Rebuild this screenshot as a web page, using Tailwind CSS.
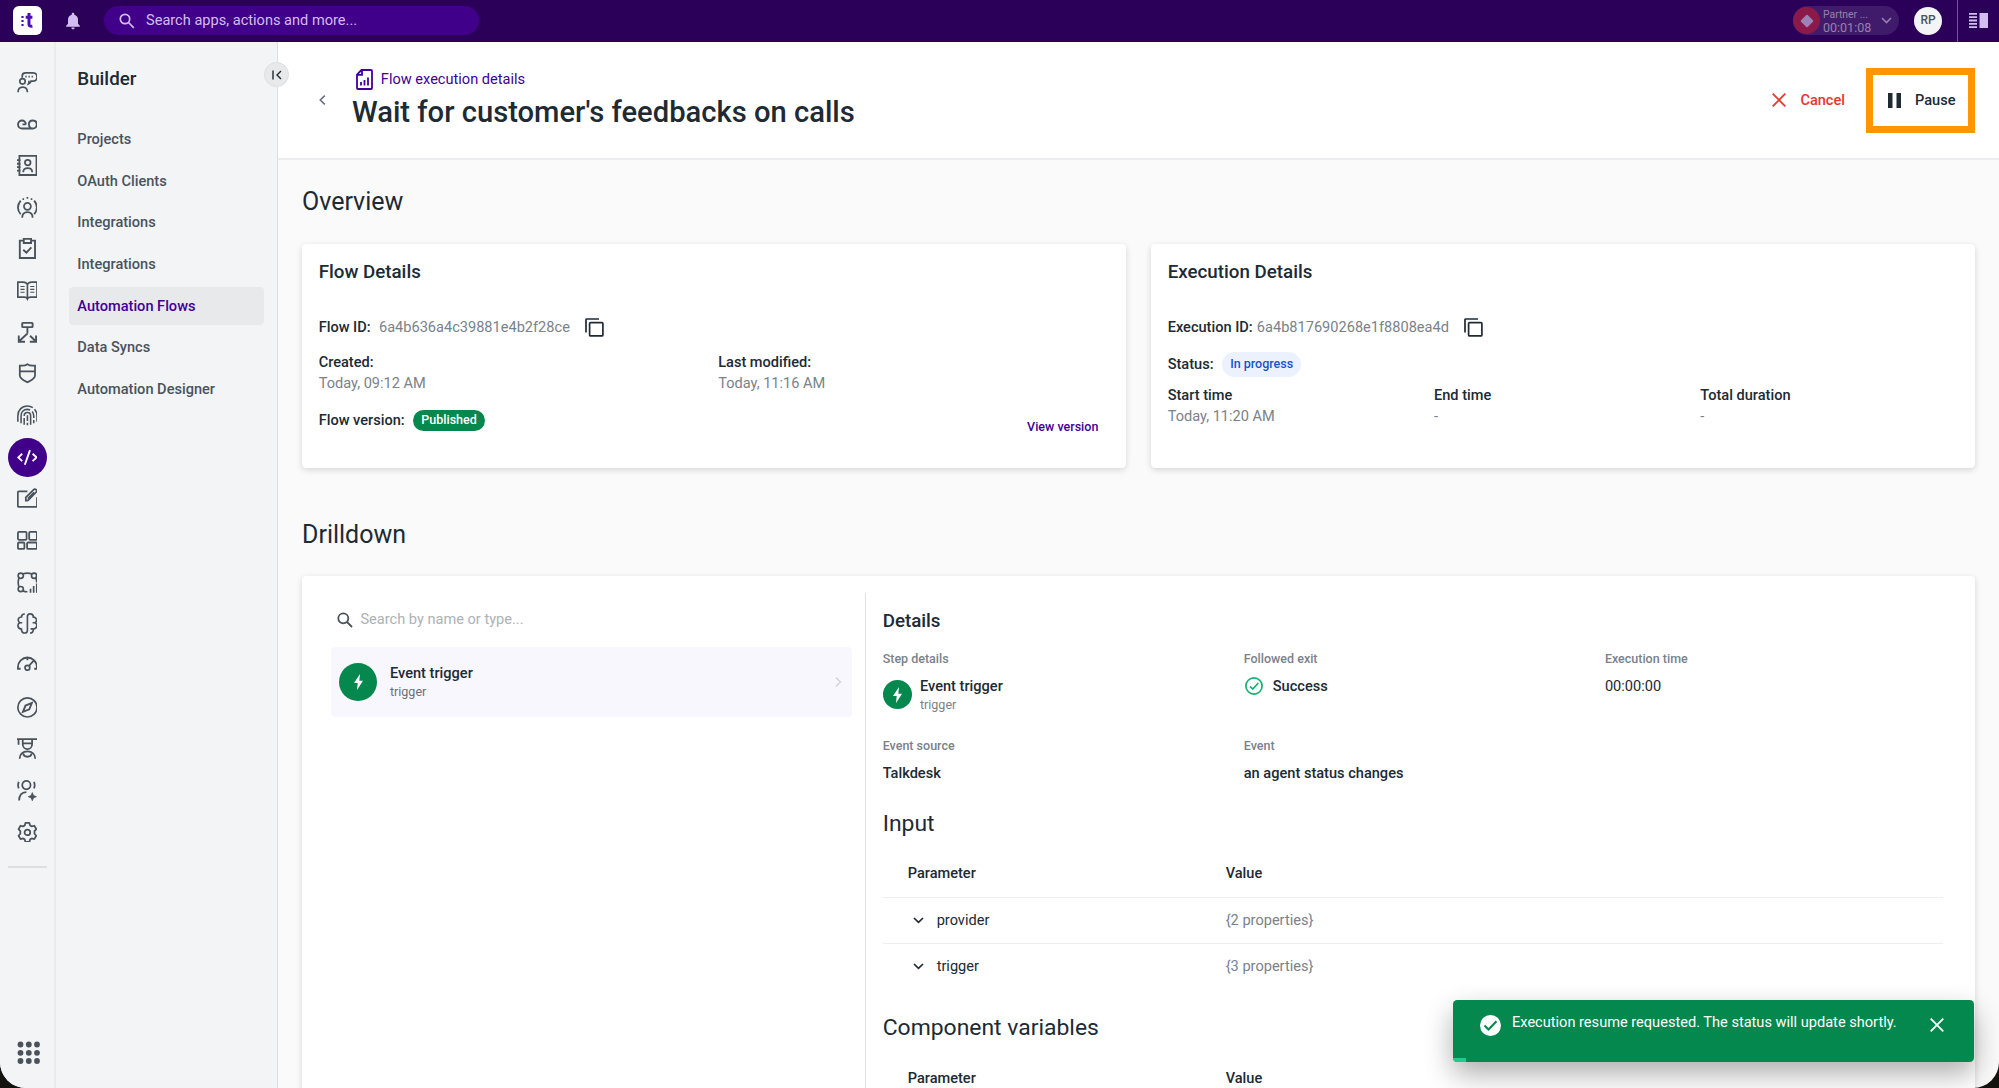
<!DOCTYPE html>
<html lang="en" class="text-[16.667px]">
  <head>
    <meta charset="UTF-8" />
    <meta name="viewport" content="width=device-width, initial-scale=1.0" />
    <title>Flow execution details</title>
    <script src="https://cdn.jsdelivr.net/npm/@tailwindcss/browser@4"></script>
  </head>
  <body class="bg-[#15130f]">
    <div class="relative flex flex-col h-screen overflow-hidden rounded-b-[26px] bg-[#fafafa] font-[Roboto,sans-serif] text-sm text-[#202a33]">
      <!-- Top bar -->
      <header class="flex h-10 shrink-0 items-center bg-[#2b0059] pl-[13px]">
        <div class="flex size-[29px] items-center justify-center rounded-[6px] bg-white">
          <svg class="size-[29px]" viewBox="0 0 29 29" fill="none" stroke="#4b0fb5">
            <path d="M16 7v11.2c0 1.8 1.2 2.4 3.4 2M12.7 11.3h6.7" stroke-width="3" />
            <path d="M9.5 10v2m0 2v2m0 2v2" stroke-width="2.2" />
          </svg>
        </div>
        <svg class="ml-[23px] h-[18px] w-[16px]" viewBox="0 0 16 18" fill="#d3bdf0">
          <path d="M8 .8c.8 0 1.3.5 1.3 1.3v.6c2.400.6 3.700 2.600 3.700 5.100v4l1.800 1.900v1H1.200v-1L3 11.800v-4C3 5.300 4.300 3.300 6.700 2.700v-.6C6.700 1.300 7.200.8 8 .8zM6.300 15.500h3.400c0 1-.7 1.800-1.700 1.800s-1.700-.8-1.700-1.800z" />
        </svg>
        <div class="ml-[23px] flex h-7 w-[375px] items-center rounded-full bg-[#410089] pl-[15px] text-[#d3bdf0]">
          <svg class="size-[16px]" viewBox="0 0 16 16" fill="none" stroke="currentColor" stroke-width="1.700">
            <circle cx="6" cy="6" r="4.700" /><path d="M9.500 9.500l5.300 5.300" />
          </svg>
          <span class="ml-[11px]">Search apps, actions and more...</span>
        </div>
        <div class="ml-auto flex h-[29px] w-[106px] items-center rounded-full bg-[#411b6b] text-[#9681ae]">
          <div class="flex size-[27px] items-center justify-center rounded-full bg-[#8b1a4b]">
            <svg class="size-[14px]" viewBox="0 0 14 14" fill="#9c83b8"><rect x="2.300" y="2.300" width="9.400" height="9.400" rx="1" transform="rotate(45 7 7)" /></svg>
          </div>
          <div class="ml-[3px] w-[49px]">
            <div class="text-[10.4px] leading-[13px]">Partner ...</div>
            <div class="text-[12.5px] leading-[13px]">00:01:08</div>
          </div>
          <svg class="ml-[9px] h-[7px] w-[11px]" viewBox="0 0 11 7" fill="none" stroke="currentColor" stroke-width="1.600"><path d="M1 1l4.500 4.500L10 1" /></svg>
        </div>
        <div class="ml-[15px] flex size-[28px] items-center justify-center rounded-full bg-[#f2f4f6] text-[12px] font-medium text-[#4a535c]">RP</div>
        <div class="ml-[15px] flex h-full w-[42px] items-center border-l border-[#76549a] pl-[11px]">
          <svg class="h-[15px] w-[19px]" viewBox="0 0 19 15" fill="#d3bdf0">
            <path d="M0 0h8v1.800H0zM0 3.300h8v1.800H0zM0 6.600h8v1.800H0zM0 9.900h8v1.800H0zM0 13.200h8V15H0zM10.500 0H19v15h-8.500z" />
          </svg>
        </div>
      </header>

      <div class="flex min-h-0 flex-1">
        <!-- App rail -->
        <nav class="flex w-[56px] shrink-0 flex-col items-center border-r-2 border-[#e9ebed] bg-[#f2f4f6] pt-4.75 text-[#4a535c]">
          <div class="flex h-10 shrink-0 items-center">
            <svg class="size-5" viewBox="0 0 20 20" fill="none" stroke="currentColor" stroke-width="1.600">
              <path d="M1 19.500c0-3.200 1.800-5 4.500-5s4.500 1.800 4.500 5M5 5.500V4c0-2 1-3.200 3-3.200h7.500c2.300 0 3.700 1.700 3.700 4s-1.500 3.900-3.700 3.900h-2c-.2 1.500-1 2.300-2.500 2.800.5-1 .6-2 .3-3" /><circle cx="5.300" cy="9" r="2.600" /><path d="M8 4.500h1.300M11 4.500h1.300M14 4.500h1.300" />
            </svg>
          </div>
          <div class="flex h-10 shrink-0 items-center">
            <svg class="size-5" viewBox="0 0 20 20" fill="none" stroke="currentColor" stroke-width="1.800">
              <path d="M8.500 10c0-2.200-1.600-3.800-3.700-3.800S1 7.800 1 10s1.600 3.900 3.800 3.900h10.400c2.200 0 3.800-1.700 3.800-3.900s-1.600-3.800-3.800-3.800-3.800 1.600-3.800 3.800c0 1.600.7 2.900 2 3.600M8.500 10H5.300" />
            </svg>
          </div>
          <div class="flex h-10 shrink-0 items-center">
            <svg class="size-5" viewBox="0 0 20 20" fill="none" stroke="currentColor" stroke-width="1.700">
              <path d="M2.300.8h16.400v18.400H2.300zM0 5h3.500M0 8.400h3.500M0 11.700h3.500M0 15h3.500M6 16.500c0-2.700 1.500-4 4.300-4s4.300 1.300 4.300 4" /><circle cx="10.300" cy="7.300" r="2.700" />
            </svg>
          </div>
          <div class="flex h-10 shrink-0 items-center">
            <svg class="size-5" viewBox="0 0 20 20" fill="none" stroke="currentColor" stroke-width="1.700">
              <circle cx="10" cy="9" r="3.300" /><path d="M5 20c0-3.500 2-5.400 5-5.400s5 1.900 5 5.400M3.500 3.500C.3 7.500.3 12.500 3.500 16.500M16.500 3.500c3.200 4 3.200 9 0 13M5.300 2h1.500M9.200.9h1.600M13.200 2h1.500" />
            </svg>
          </div>
          <div class="flex h-10 shrink-0 items-center">
            <svg class="size-5" viewBox="0 0 20 20" fill="none" stroke="currentColor" stroke-width="1.800">
              <path d="M6.500 2.500H2.700v16.700h14.600V2.500h-3.800M6.500.8h7v4h-7zM6 11.300l3 2.700 4.800-5" />
            </svg>
          </div>
          <div class="flex h-10 shrink-0 items-center">
            <svg class="size-5" viewBox="0 0 20 20" fill="none" stroke="currentColor" stroke-width="1.600">
              <path d="M10 4C9 2.500 7.500 2 6 2H.8v14.500H7c1.500 0 2.500.5 3 1.700.5-1.200 1.500-1.700 3-1.700h6.200V2H14c-1.500 0-3 .5-4 2v14" /><path d="M3.300 6.200h4M3.300 9h4M3.300 11.800h4M12.700 6.200h4M12.700 9h4M12.700 11.800h4" stroke-width="1.100" />
            </svg>
          </div>
          <div class="flex h-10 shrink-0 items-center">
            <svg class="size-5" viewBox="0 0 20 20" fill="none" stroke="currentColor" stroke-width="1.800">
              <rect x="5" y=".9" width="10" height="4" rx=".6" /><path d="M10 5v6M10 11l-8 7.500M12.500 13.200l5.500 5.300M1.700 13v6h6M18.300 13v6h-6" />
            </svg>
          </div>
          <div class="flex h-10 shrink-0 items-center">
            <svg class="size-5" viewBox="0 0 20 20" fill="none" stroke="currentColor" stroke-width="1.700">
              <path d="M10 1.300C8.500 2.300 7 2.600 5.300 2.600H2.700V12c0 3.200 4.500 5 7.300 6.500 2.800-1.500 7.300-3.300 7.300-6.500V2.600h-2.600C13 2.600 11.500 2.300 10 1.300zM2.700 8h14.600" />
            </svg>
          </div>
          <div class="flex h-10 shrink-0 items-center">
            <svg class="size-5" viewBox="0 0 20 20" fill="none" stroke="currentColor" stroke-width="1.500">
              <path d="M.8 16v-5.500C.8 5 4.500 1 10 1c2 0 3.800.6 5.200 1.600M16.800 4c1.600 1.700 2.400 4 2.400 6.500V16M3.900 17.500V10.500c0-3.600 2.300-6.300 6.100-6.300 1 0 1.800.2 2.600.5M14.500 6.200c1 1.100 1.600 2.600 1.600 4.300v2M16.100 14.500v3M6.900 10.500c0-2 1.100-3.300 3.100-3.300s3.100 1.300 3.100 3.300V19M6.900 12.500V19M10 9.800v5.500M10 17v2.500" />
            </svg>
          </div>
          <div class="flex h-10 shrink-0 items-center">
            <div class="flex size-[39px] items-center justify-center rounded-full bg-[#410089] text-white">
              <svg class="size-5" viewBox="0 0 20 20" fill="none" stroke="currentColor" stroke-width="1.800">
                <path d="M5 6.500L1.300 10 5 13.500M15 6.500l3.700 3.500-3.700 3.500M12.500 3L7.500 17" />
              </svg>
            </div>
          </div>
          <div class="flex h-10 shrink-0 items-center">
            <svg class="size-5" viewBox="0 0 20 20" fill="none" stroke="currentColor" stroke-width="1.700">
              <path d="M10 3.200H1.800c-.6 0-1 .4-1 1v13c0 .6.400 1 1 1h16.400c.6 0 1-.4 1-1V9M8.500 12.200V9l7.300-7.300c.8-.8 1.800-.8 2.500-.1.700.7.700 1.700 0 2.500l-7.200 7.200c-.6.600-1.500.9-2.600.9zM10.500 10.200l6-6" />
            </svg>
          </div>
          <div class="flex h-10 shrink-0 items-center">
            <svg class="size-5" viewBox="0 0 20 20" fill="none" stroke="currentColor" stroke-width="1.700">
              <rect x=".9" y="1.900" width="8.300" height="7.500" rx="1" /><rect x="11.700" y="1.900" width="7.400" height="7.500" rx="1" /><rect x=".9" y="12" width="6.200" height="6.200" rx="1" /><rect x="9.700" y="12" width="9.400" height="6.200" rx="1" />
            </svg>
          </div>
          <div class="flex h-10 shrink-0 items-center">
            <svg class="size-5" viewBox="0 0 20 20" fill="none" stroke="currentColor" stroke-width="1.600">
              <circle cx="3.600" cy="3.600" r="2.500" /><circle cx="16.400" cy="3.600" r="2.500" /><circle cx="3.600" cy="16.400" r="2.500" /><path d="M5.500 1.900c3-1 6-1 9 0M1.900 5.500c-1 3-1 6 0 9M18.100 5.500c.5 1.300.9 2.500.9 4.500M5.500 18.100c1.300.5 2.500.9 4.500.9M13 20v-4M16 20v-6.500M19 20v-9" />
            </svg>
          </div>
          <div class="flex h-10 shrink-0 items-center">
            <svg class="size-5" viewBox="0 0 20 20" fill="none" stroke="currentColor" stroke-width="1.600">
              <path d="M7.500 1C5.500 1 4.300 2 4.300 3.800 2 4 .9 5.300 1.300 7.300c.2 1 .8 1.700 1.500 2.100-1.500.5-2.100 1.700-1.800 3.300.3 1.700 1.500 2.700 3.300 2.800 0 2.300 1.200 3.700 3.200 3.700 1.700 0 2.500-1.100 2.500-2.700V3.500C10 1.900 10.800.8 12.500.8c2 0 3.200 1.200 3.200 3.200 2 0 3.300 1.500 3 3.300-.2 1-.8 1.700-1.500 2.100 1.500.5 2.100 1.700 1.800 3.300-.3 1.700-1.500 2.700-3.300 2.800 0 2.300-1.200 3.700-3.200 3.700M2.800 9.400H5M17.200 9.400H15M13 15.200h2.700" />
            </svg>
          </div>
          <div class="flex h-10 shrink-0 items-center">
            <svg class="size-5" viewBox="0 0 20 20" fill="none" stroke="currentColor" stroke-width="1.700">
              <path d="M3.500 13.200H.9v-1.700C.9 6.500 5 2.400 10 2.400s9.100 4.100 9.100 9.100v1.700h-2.600M11.500 10.500L16.500 5M10 2.400V5" /><circle cx="10" cy="12.300" r="2.300" />
            </svg>
          </div>
          <div class="flex h-10 shrink-0 items-center">
            <svg class="size-5" viewBox="0 0 20 20" fill="none" stroke="currentColor" stroke-width="1.600">
              <circle cx="10" cy="10" r="9.200" /><path d="M14.300 5.700l-2.500 6.100-6.100 2.500 2.500-6.100z" stroke-width="1.800" />
            </svg>
          </div>
          <div class="flex h-10 shrink-0 items-center">
            <svg class="size-5" viewBox="0 0 20 20" fill="none" stroke="currentColor" stroke-width="1.700">
              <path d="M0 1h20M1.500 1v5.500M5.500 1.500V6c0 2.700 2 4.600 4.500 4.600s4.500-1.900 4.500-4.600V1.500M5.500 5.200h9M2.500 20c0-4.300 3-7.200 7.500-7.200s7.500 2.900 7.500 7.200M6 15c.3 1.800 1.800 3 4 3s3.700-1.200 4-3" />
            </svg>
          </div>
          <div class="flex h-10 shrink-0 items-center">
            <svg class="size-5" viewBox="0 0 20 20" fill="none" stroke="currentColor" stroke-width="1.700">
              <circle cx="9" cy="4.900" r="4" /><path d="M2 19.800c0-5 2.500-8 7-8.200M1.700 1.800C.8 4 .8 6 1.700 8M16.300 1.800c.9 2.200.9 4.200 0 6.200" /><path d="M14.700 12l1.200 2.800 2.800 1.200-2.800 1.200-1.200 2.800-1.200-2.800-2.800-1.200 2.800-1.200z" fill="currentColor" stroke-width=".6" />
            </svg>
          </div>
          <div class="flex h-10 shrink-0 items-center">
            <svg class="size-5" viewBox="0 0 20 20" fill="none" stroke="currentColor" stroke-width="1.700" stroke-linejoin="round">
              <path d="M8.100.9h3.800l.7 2.400 1.600.9 2.400-.6 1.900 3.200-1.700 1.900v2.600l1.700 1.900-1.900 3.200-2.400-.6-1.600.9-.7 2.400H8.100l-.7-2.400-1.600-.9-2.400.6-1.900-3.200 1.700-1.900V8.700L1.500 6.800l1.900-3.200 2.400.6 1.600-.9z" /><circle cx="10" cy="10" r="2.700" />
            </svg>
          </div>
          <div class="mt-[13px] h-0.5 w-[39px] shrink-0 bg-[#dcdfe2]"></div>
          <svg class="mt-auto mb-[24px] ml-[2px] size-[23px] shrink-0" viewBox="0 0 23 23" fill="#4a535c">
            <circle cx="3.500" cy="3.500" r="2.900" /><circle cx="11.800" cy="3.500" r="2.900" /><circle cx="20" cy="3.500" r="2.900" />
            <circle cx="3.500" cy="11.800" r="2.900" /><circle cx="11.800" cy="11.800" r="2.900" /><circle cx="20" cy="11.800" r="2.900" />
            <circle cx="3.500" cy="20" r="2.900" /><circle cx="11.800" cy="20" r="2.900" /><circle cx="20" cy="20" r="2.900" />
          </svg>
        </nav>

        <!-- Builder menu -->
        <aside class="relative w-[222px] shrink-0 border-r border-[#dcdfe2] bg-[#f2f4f6] px-[13px] font-medium text-[#4a535c]">
          <h2 class="mt-6 px-2 text-lg leading-6 text-[#202a33]">Builder</h2>
          <ul class="mt-7 flex flex-col gap-1">
            <li class="flex h-9 items-center px-2">Projects</li>
            <li class="flex h-9 items-center px-2">OAuth Clients</li>
            <li class="flex h-9 items-center px-2">Integrations</li>
            <li class="flex h-9 items-center px-2">Integrations</li>
            <li class="flex h-9 items-center rounded bg-[#e8e9eb] px-2 text-[#410099]">Automation Flows</li>
            <li class="flex h-9 items-center px-2">Data Syncs</li>
            <li class="flex h-9 items-center px-2">Automation Designer</li>
          </ul>
          <button class="absolute top-5 -right-[12px] z-10 flex size-[25px] items-center justify-center rounded-full border border-[#dcdfe2] bg-[#e8e9eb]">
            <svg class="h-[10px] w-[10px]" viewBox="0 0 10 10" fill="none" stroke="#202a33" stroke-width="1.400"><path d="M1 .5v9M9 1L5 5l4 4" /></svg>
          </button>
        </aside>

        <main class="min-w-0 flex-1">
          <!-- Page header -->
          <div class="flex h-28.5 items-center border-b-2 border-[#ececee] bg-white pr-[24px]">
            <svg class="ml-[41px] h-[10px] w-[7px]" viewBox="0 0 7 10" fill="none" stroke="#68717a" stroke-width="1.600"><path d="M5.800.6L1.300 5l4.500 4.400" /></svg>
            <div class="ml-[26px]">
              <div class="flex items-center text-[#410099]">
                <svg class="ml-[3.500px] h-[21px] w-[17px]" viewBox="0 0 17 21" fill="none" stroke="currentColor" stroke-width="1.800">
                  <path d="M5.500 1H15c.6 0 1 .4 1 1v17c0 .6-.4 1-1 1H2c-.6 0-1-.4-1-1V5.500zM6 1v4.800H1M5 16.500v-3.500M8.500 16.500v-5.500M12 16.500V8.500" />
                </svg>
                <span class="ml-2 leading-5">Flow execution details</span>
              </div>
              <h1 class="mt-1 text-[1.75rem] leading-9 font-medium">Wait for customer's feedbacks on calls</h1>
            </div>
            <button class="ml-auto flex items-center font-medium text-[#e5382b]">
              <svg class="size-[14px]" viewBox="0 0 14 14" fill="none" stroke="currentColor" stroke-width="1.700"><path d="M.7.7l12.600 12.600M13.300.7L.7 13.300" /></svg>
              <span class="ml-[14px]">Cancel</span>
            </button>
            <button class="ml-[21px] flex h-[65px] w-[109px] items-center border-[7px] border-[#ff9500] pl-[15px] font-medium">
              <svg class="h-[15px] w-[13px]" viewBox="0 0 13 15" fill="currentColor"><path d="M0 0h4.500v15H0zM8.500 0H13v15H8.500z" /></svg>
              <span class="ml-[14px]">Pause</span>
            </button>
          </div>

          <div class="pr-[24px] pl-[24px]">
            <h2 class="mt-6 text-2xl leading-8">Overview</h2>
            <div class="mt-6 grid grid-cols-2 gap-6">
              <section class="h-53.75 rounded bg-white px-4 pt-4 shadow-[0_2px_6px_rgba(0,0,0,0.15)]">
                <h3 class="text-lg leading-6 font-medium">Flow Details</h3>
                <div class="mt-6 flex h-8 items-center">
                  <span class="font-medium">Flow ID:</span>
                  <span class="ml-2 text-[#7a828a]">6a4b636a4c39881e4b2f28ce</span>
                  <svg class="ml-[15px] size-[19px]" viewBox="0 0 19 19" fill="none" stroke="currentColor" stroke-width="1.700"><path d="M1 14.500V1.800c0-.5.300-.8.800-.8H14" /><rect x="4.600" y="4.600" width="13.300" height="13.300" rx="1" /></svg>
                </div>
                <div class="mt-2 grid grid-cols-2 gap-2 leading-5">
                  <div>
                    <div class="font-medium">Created:</div>
                    <div class="text-[#7a828a]">Today, 09:12 AM</div>
                  </div>
                  <div>
                    <div class="font-medium">Last modified:</div>
                    <div class="text-[#7a828a]">Today, 11:16 AM</div>
                  </div>
                </div>
                <div class="mt-4 flex items-start justify-between pr-[11px] font-medium">
                  <div class="flex h-5 items-center">
                    Flow version:
                    <span class="ml-2 flex h-[21px] items-center rounded-full bg-[#04884e] px-2 text-xs text-white">Published</span>
                  </div>
                  <a class="mt-2 text-xs leading-4 text-[#410099]">View version</a>
                </div>
              </section>

              <section class="h-53.75 rounded bg-white px-4 pt-4 shadow-[0_2px_6px_rgba(0,0,0,0.15)]">
                <h3 class="text-lg leading-6 font-medium">Execution Details</h3>
                <div class="mt-6 flex h-8 items-center">
                  <span class="font-medium">Execution ID:</span>
                  <span class="ml-1 text-[#7a828a]">6a4b817690268e1f8808ea4d</span>
                  <svg class="ml-[15px] size-[19px]" viewBox="0 0 19 19" fill="none" stroke="currentColor" stroke-width="1.700"><path d="M1 14.500V1.800c0-.5.300-.8.800-.8H14" /><rect x="4.600" y="4.600" width="13.300" height="13.300" rx="1" /></svg>
                </div>
                <div class="mt-2 flex h-6 items-center font-medium">
                  Status:
                  <span class="ml-2 flex h-6 items-center rounded-full bg-[#ebf2fd] px-2 text-xs text-[#1554d1]">In progress</span>
                </div>
                <div class="mt-2 grid grid-cols-3 gap-2 leading-5">
                  <div>
                    <div class="font-medium">Start time</div>
                    <div class="text-[#7a828a]">Today, 11:20 AM</div>
                  </div>
                  <div>
                    <div class="font-medium">End time</div>
                    <div class="text-[#7a828a]">-</div>
                  </div>
                  <div>
                    <div class="font-medium">Total duration</div>
                    <div class="text-[#7a828a]">-</div>
                  </div>
                </div>
              </section>
            </div>

            <h2 class="mt-12 text-2xl leading-8">Drilldown</h2>
            <section class="mt-6 flex h-[560px] rounded bg-white pt-4 shadow-[0_2px_6px_rgba(0,0,0,0.15)]">
              <!-- Step list -->
              <div class="w-[564px] shrink-0 border-r border-[#dfe2e5] pt-3 pr-[13px] pl-7">
                <div class="flex h-7 items-center pl-1.5 text-[#adb2b7]">
                  <svg class="size-[16px]" viewBox="0 0 16 16" fill="none" stroke="#4a535c" stroke-width="1.800"><circle cx="6.300" cy="6.300" r="5" /><path d="M10 10l5 5" /></svg>
                  <span class="ml-[7px]">Search by name or type...</span>
                </div>
                <div class="mt-3 flex h-16.75 items-center rounded bg-[#f8f7fd] px-2">
                  <div class="flex size-[38px] items-center justify-center rounded-full bg-[#04884e]">
                    <svg class="h-[16px] w-[9px]" viewBox="0 0 9 16" fill="white"><path d="M6 0L0 9h3.700L3 16l6-9.200H5.300z" /></svg>
                  </div>
                  <div class="ml-3">
                    <div class="leading-5 font-medium">Event trigger</div>
                    <div class="text-xs leading-4 text-[#68717a]">trigger</div>
                  </div>
                  <svg class="mr-[2px] ml-auto h-[10px] w-[7px]" viewBox="0 0 7 10" fill="none" stroke="#d3d6da" stroke-width="1.500"><path d="M1 .6L5.500 5 1 9.400" /></svg>
                </div>
              </div>

              <!-- Step details -->
              <div class="flex-1 pt-4 pr-[32px] pl-4">
                <h3 class="text-lg leading-6 font-medium">Details</h3>
                <div class="mt-4 grid grid-cols-3 gap-x-[23px] gap-y-6 leading-5 font-medium">
                  <div>
                    <div class="text-xs leading-4 text-[#7a828a]">Step details</div>
                    <div class="mt-2 flex items-center">
                      <div class="flex size-[29px] items-center justify-center rounded-full bg-[#04884e]">
                        <svg class="h-[16px] w-[9px]" viewBox="0 0 9 16" fill="white"><path d="M6 0L0 9h3.700L3 16l6-9.200H5.300z" /></svg>
                      </div>
                      <div class="ml-2">
                        <div>Event trigger</div>
                        <div class="text-xs leading-4 font-normal text-[#7a828a]">trigger</div>
                      </div>
                    </div>
                  </div>
                  <div>
                    <div class="text-xs leading-4 text-[#7a828a]">Followed exit</div>
                    <div class="mt-2 flex items-center">
                      <svg class="ml-[1px] size-[18px]" viewBox="0 0 18 18" fill="none" stroke="#14b26f" stroke-width="1.700"><circle cx="9" cy="9" r="8.100" /><path d="M5 9.300l2.800 2.800L13.300 6" /></svg>
                      <span class="ml-[10px]">Success</span>
                    </div>
                  </div>
                  <div>
                    <div class="text-xs leading-4 text-[#7a828a]">Execution time</div>
                    <div class="mt-2 font-normal">00:00:00</div>
                  </div>
                  <div>
                    <div class="text-xs leading-4 text-[#7a828a]">Event source</div>
                    <div class="mt-2">Talkdesk</div>
                  </div>
                  <div>
                    <div class="text-xs leading-4 text-[#7a828a]">Event</div>
                    <div class="mt-2">an agent status changes</div>
                  </div>
                </div>

                <h2 class="mt-5.5 text-[1.375rem] leading-8">Input</h2>
                <div class="mt-2.5">
                  <div class="flex h-11 items-center pl-6 font-medium">
                    <div class="w-[318px]">Parameter</div>
                    <div>Value</div>
                  </div>
                  <div class="flex h-11 items-center border-t border-[#eceef0] pl-6">
                    <div class="flex w-[318px] items-center pl-[5px]">
                      <svg class="h-[7px] w-[11px]" viewBox="0 0 11 7" fill="none" stroke="currentColor" stroke-width="1.700"><path d="M1 1l4.500 4.300L10 1" /></svg>
                      <span class="ml-[13px]">provider</span>
                    </div>
                    <div class="text-[#7a828a]">{2 properties}</div>
                  </div>
                  <div class="flex h-11 items-center border-t border-[#eceef0] pl-6">
                    <div class="flex w-[318px] items-center pl-[5px]">
                      <svg class="h-[7px] w-[11px]" viewBox="0 0 11 7" fill="none" stroke="currentColor" stroke-width="1.700"><path d="M1 1l4.500 4.300L10 1" /></svg>
                      <span class="ml-[13px]">trigger</span>
                    </div>
                    <div class="text-[#7a828a]">{3 properties}</div>
                  </div>
                </div>

                <h2 class="mt-5.5 text-[1.375rem] leading-8">Component variables</h2>
                <div class="mt-2.5 flex h-11 items-center pl-6 font-medium">
                  <div class="w-[318px]">Parameter</div>
                  <div>Value</div>
                </div>
              </div>
            </section>
          </div>
        </main>
      </div>

      <!-- Toast -->
      <div class="absolute right-[25px] bottom-[26px] flex h-[62px] w-[521px] items-start rounded bg-[#04884e] pt-[12px] pl-[27px] text-white shadow-[0_12px_28px_rgba(0,0,0,0.32)]">
        <svg class="mt-[3px] size-[21px]" viewBox="0 0 21 21" fill="none"><circle cx="10.500" cy="10.500" r="10.500" fill="white" /><path d="M4.500 10.500l4 4 8-8.300" stroke="#04884e" stroke-width="2" /></svg>
        <span class="ml-[11px] leading-5">Execution resume requested. The status will update shortly.</span>
        <svg class="mt-[6px] mr-[30px] ml-auto size-[14px]" viewBox="0 0 14 14" fill="none" stroke="currentColor" stroke-width="1.800"><path d="M.7.7l12.600 12.600M13.300.7L.7 13.300" /></svg>
        <div class="absolute bottom-0 left-0 h-1 w-[13px] rounded-bl bg-[#22c98e]"></div>
      </div>
    </div>
  </body>
</html>
